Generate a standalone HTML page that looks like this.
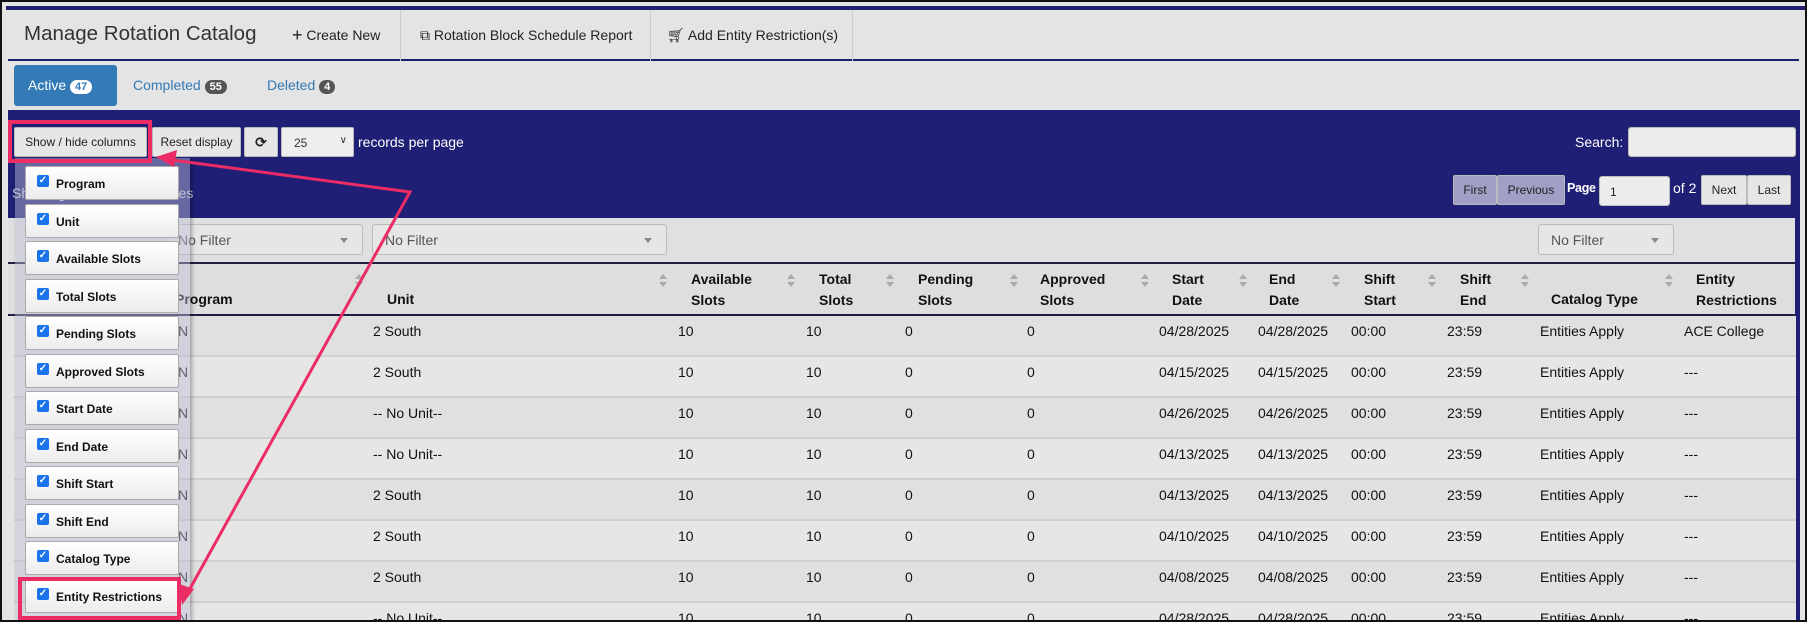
<!DOCTYPE html>
<html><head><meta charset="utf-8"><style>
*{box-sizing:border-box;margin:0;padding:0}
body{width:1807px;height:622px;overflow:hidden;background:#111;font-family:"Liberation Sans",Arial,sans-serif;font-size:14px;color:#222;position:relative}
.a{position:absolute;white-space:nowrap}
#page{position:absolute;left:2px;top:2px;width:1803px;height:618px;background:#e4e4e4;overflow:hidden}
.btn{position:absolute;background:#e6e6e6;border:1px solid #bbb;border-radius:2px;font-size:12px;color:#222;display:flex;align-items:center;justify-content:center}
.hd{position:absolute;font-weight:bold;font-size:14px;line-height:21px;color:#111}
.sort{position:absolute;width:8px;height:14px}
.sort:before{content:"";position:absolute;left:0;top:0;border:4px solid transparent;border-bottom:5px solid #aaa;border-top:0}
.sort:after{content:"";position:absolute;left:0;top:8px;border:4px solid transparent;border-top:5px solid #aaa;border-bottom:0}
.row{position:absolute;left:12px;width:1782px;height:41px;border-bottom:2px solid #cfcfcf}
.c{position:absolute;top:7px;font-size:14px;color:#111}
.item{position:absolute;left:23px;width:154px;height:34px;background:linear-gradient(#fff,#ececec);border:1px solid #aaa;border-radius:2px;font-weight:bold;font-size:12px;color:#111}
.item .cb{position:absolute;left:11px;top:8px;width:12px;height:12px;background:#1a73e8;border-radius:2px;color:#fff;font-size:10px;line-height:12px;text-align:center}
.item span.t{position:absolute;left:30px;top:10px}
.sel{position:absolute;height:31px;background:#e6e6e6;border:1px solid #bbb;border-radius:3px;color:#555;font-size:14px;padding:7px 12px}
.sel:after{content:"";position:absolute;right:14px;top:13px;border:4px solid transparent;border-top:5px solid #888;border-bottom:0}
</style></head><body>
<div id="page">
<div class="a" style="left:4px;top:4px;width:1799px;height:4px;background:#1f1f6e"></div>
<div class="a" style="left:6px;top:8px;width:1791px;height:51px;background:#e4e4e4;border-bottom:2px solid #1f1f6e"></div>
<div class="a" style="left:22px;top:20px;font-size:20.5px;color:#333">Manage Rotation Catalog</div>
<div class="a" style="left:290px;top:22px;font-size:14px;color:#222"><span style="font-size:18px;position:relative;top:1px">+</span> Create New</div>
<div class="a" style="left:398px;top:8px;width:1px;height:51px;background:#ccc"></div>
<div class="a" style="left:418px;top:25px;font-size:14px;color:#222">⧉ Rotation Block Schedule Report</div>
<div class="a" style="left:648px;top:8px;width:1px;height:51px;background:#ccc"></div>
<div class="a" style="left:665px;top:25px;font-size:14px;color:#222">🛒︎ Add Entity Restriction(s)</div>
<div class="a" style="left:850px;top:8px;width:1px;height:51px;background:#ccc"></div>
<div class="a" style="left:12px;top:63px;width:103px;height:41px;background:#337ab7;border-radius:3px;color:#fff;font-size:14px;padding:12px 0 0 14px">Active <span style="background:#fff;color:#337ab7;border-radius:9px;padding:1px 5px;font-size:11px;font-weight:bold">47</span></div>
<div class="a" style="left:131px;top:75px;color:#337ab7;font-size:14px">Completed <span style="background:#555;color:#fff;border-radius:9px;padding:1px 5px;font-size:11px;font-weight:bold">55</span></div>
<div class="a" style="left:265px;top:75px;color:#337ab7;font-size:14px">Deleted <span style="background:#555;color:#fff;border-radius:9px;padding:1px 5px;font-size:11px;font-weight:bold">4</span></div>
<div class="a" style="left:6px;top:108px;width:1791px;height:108px;background:#1f1f75"></div>
<div class="a" style="left:1793px;top:108px;width:5px;height:510px;background:#1f1f75"></div>
<div class="btn" style="left:12px;top:125px;width:133px;height:30px">Show / hide columns</div>
<div class="btn" style="left:150px;top:125px;width:89px;height:30px">Reset display</div>
<div class="btn" style="left:242px;top:125px;width:34px;height:30px;font-weight:bold;font-size:14px">⟳</div>
<div class="a" style="left:279px;top:125px;width:73px;height:30px;background:#eee;border:1px solid #bbb;border-radius:2px;font-size:12px;padding:8px 12px;color:#333">25<span style="position:absolute;right:6px;top:7px;font-size:10px">∨</span></div>
<div class="a" style="left:356px;top:132px;color:#fff;font-size:14px">records per page</div>
<div class="a" style="left:1573px;top:132px;color:#fff;font-size:14px">Search:</div>
<div class="a" style="left:1626px;top:125px;width:168px;height:30px;background:#ececec;border:1px solid #bbb;border-radius:3px"></div>
<div class="a" style="left:10px;top:183px;color:#ccc;font-size:14px">Showing 1 to 25 of 47 entries</div>
<div class="btn" style="left:1451px;top:173px;width:44px;height:30px;background:#a0a0c6">First</div>
<div class="btn" style="left:1495px;top:173px;width:68px;height:30px;background:#a0a0c6">Previous</div>
<div class="a" style="left:1565px;top:179px;color:#fff;font-weight:bold;font-size:12.5px;letter-spacing:-0.3px">Page</div>
<div class="a" style="left:1597px;top:174px;width:71px;height:30px;background:#ececec;border:1px solid #bbb;border-radius:3px;font-size:12px;padding:8px 10px">1</div>
<div class="a" style="left:1671px;top:178px;color:#fff;font-size:14px">of 2</div>
<div class="btn" style="left:1699px;top:173px;width:46px;height:30px">Next</div>
<div class="btn" style="left:1745px;top:173px;width:44px;height:30px">Last</div>
<div class="a" style="left:6px;top:216px;width:1787px;height:46px;background:#e0e0e0;border-bottom:2px solid #1f1f40"></div>
<div class="sel" style="left:163px;top:222px;width:198px">No Filter</div>
<div class="sel" style="left:370px;top:222px;width:295px">No Filter</div>
<div class="sel" style="left:1536px;top:222px;width:136px">No Filter</div>
<div class="a" style="left:6px;top:262px;width:1787px;height:52px;background:#dedede;border-bottom:2px solid #1f1f40"></div>
<div class="hd" style="left:173px;top:287px">Program</div>
<div class="hd" style="left:385px;top:287px">Unit</div>
<div class="hd" style="left:689px;top:267px">Available<br>Slots</div>
<div class="hd" style="left:817px;top:267px">Total<br>Slots</div>
<div class="hd" style="left:916px;top:267px">Pending<br>Slots</div>
<div class="hd" style="left:1038px;top:267px">Approved<br>Slots</div>
<div class="hd" style="left:1170px;top:267px">Start<br>Date</div>
<div class="hd" style="left:1267px;top:267px">End<br>Date</div>
<div class="hd" style="left:1362px;top:267px">Shift<br>Start</div>
<div class="hd" style="left:1458px;top:267px">Shift<br>End</div>
<div class="hd" style="left:1549px;top:287px">Catalog Type</div>
<div class="hd" style="left:1694px;top:267px">Entity<br>Restrictions</div>
<div class="sort" style="left:353px;top:272px"></div>
<div class="sort" style="left:657px;top:272px"></div>
<div class="sort" style="left:785px;top:272px"></div>
<div class="sort" style="left:884px;top:272px"></div>
<div class="sort" style="left:1008px;top:272px"></div>
<div class="sort" style="left:1139px;top:272px"></div>
<div class="sort" style="left:1237px;top:272px"></div>
<div class="sort" style="left:1330px;top:272px"></div>
<div class="sort" style="left:1426px;top:272px"></div>
<div class="sort" style="left:1519px;top:272px"></div>
<div class="sort" style="left:1663px;top:272px"></div>
<div class="row" style="top:314px;background:#e0e0e0"><span class="c" style="left:164px">N</span><span class="c" style="left:359px">2 South</span><span class="c" style="left:664px">10</span><span class="c" style="left:792px">10</span><span class="c" style="left:891px">0</span><span class="c" style="left:1013px">0</span><span class="c" style="left:1145px">04/28/2025</span><span class="c" style="left:1244px">04/28/2025</span><span class="c" style="left:1337px">00:00</span><span class="c" style="left:1433px">23:59</span><span class="c" style="left:1526px">Entities Apply</span><span class="c" style="left:1670px">ACE College</span></div>
<div class="row" style="top:355px;background:#e6e6e6"><span class="c" style="left:164px">N</span><span class="c" style="left:359px">2 South</span><span class="c" style="left:664px">10</span><span class="c" style="left:792px">10</span><span class="c" style="left:891px">0</span><span class="c" style="left:1013px">0</span><span class="c" style="left:1145px">04/15/2025</span><span class="c" style="left:1244px">04/15/2025</span><span class="c" style="left:1337px">00:00</span><span class="c" style="left:1433px">23:59</span><span class="c" style="left:1526px">Entities Apply</span><span class="c" style="left:1670px">---</span></div>
<div class="row" style="top:396px;background:#e0e0e0"><span class="c" style="left:164px">N</span><span class="c" style="left:359px">-- No Unit--</span><span class="c" style="left:664px">10</span><span class="c" style="left:792px">10</span><span class="c" style="left:891px">0</span><span class="c" style="left:1013px">0</span><span class="c" style="left:1145px">04/26/2025</span><span class="c" style="left:1244px">04/26/2025</span><span class="c" style="left:1337px">00:00</span><span class="c" style="left:1433px">23:59</span><span class="c" style="left:1526px">Entities Apply</span><span class="c" style="left:1670px">---</span></div>
<div class="row" style="top:437px;background:#e6e6e6"><span class="c" style="left:164px">N</span><span class="c" style="left:359px">-- No Unit--</span><span class="c" style="left:664px">10</span><span class="c" style="left:792px">10</span><span class="c" style="left:891px">0</span><span class="c" style="left:1013px">0</span><span class="c" style="left:1145px">04/13/2025</span><span class="c" style="left:1244px">04/13/2025</span><span class="c" style="left:1337px">00:00</span><span class="c" style="left:1433px">23:59</span><span class="c" style="left:1526px">Entities Apply</span><span class="c" style="left:1670px">---</span></div>
<div class="row" style="top:478px;background:#e0e0e0"><span class="c" style="left:164px">N</span><span class="c" style="left:359px">2 South</span><span class="c" style="left:664px">10</span><span class="c" style="left:792px">10</span><span class="c" style="left:891px">0</span><span class="c" style="left:1013px">0</span><span class="c" style="left:1145px">04/13/2025</span><span class="c" style="left:1244px">04/13/2025</span><span class="c" style="left:1337px">00:00</span><span class="c" style="left:1433px">23:59</span><span class="c" style="left:1526px">Entities Apply</span><span class="c" style="left:1670px">---</span></div>
<div class="row" style="top:519px;background:#e6e6e6"><span class="c" style="left:164px">N</span><span class="c" style="left:359px">2 South</span><span class="c" style="left:664px">10</span><span class="c" style="left:792px">10</span><span class="c" style="left:891px">0</span><span class="c" style="left:1013px">0</span><span class="c" style="left:1145px">04/10/2025</span><span class="c" style="left:1244px">04/10/2025</span><span class="c" style="left:1337px">00:00</span><span class="c" style="left:1433px">23:59</span><span class="c" style="left:1526px">Entities Apply</span><span class="c" style="left:1670px">---</span></div>
<div class="row" style="top:560px;background:#e0e0e0"><span class="c" style="left:164px">N</span><span class="c" style="left:359px">2 South</span><span class="c" style="left:664px">10</span><span class="c" style="left:792px">10</span><span class="c" style="left:891px">0</span><span class="c" style="left:1013px">0</span><span class="c" style="left:1145px">04/08/2025</span><span class="c" style="left:1244px">04/08/2025</span><span class="c" style="left:1337px">00:00</span><span class="c" style="left:1433px">23:59</span><span class="c" style="left:1526px">Entities Apply</span><span class="c" style="left:1670px">---</span></div>
<div class="row" style="top:601px;background:#e6e6e6"><span class="c" style="left:164px">N</span><span class="c" style="left:359px">-- No Unit--</span><span class="c" style="left:664px">10</span><span class="c" style="left:792px">10</span><span class="c" style="left:891px">0</span><span class="c" style="left:1013px">0</span><span class="c" style="left:1145px">04/28/2025</span><span class="c" style="left:1244px">04/28/2025</span><span class="c" style="left:1337px">00:00</span><span class="c" style="left:1433px">23:59</span><span class="c" style="left:1526px">Entities Apply</span><span class="c" style="left:1670px">---</span></div>
<div class="a" style="left:13px;top:156px;width:175px;height:470px;background:rgba(190,190,215,0.45);box-shadow:2px 2px 4px rgba(0,0,0,.3)"></div>
<div class="item" style="top:164px"><span class="cb">✓</span><span class="t">Program</span></div>
<div class="item" style="top:202px"><span class="cb">✓</span><span class="t">Unit</span></div>
<div class="item" style="top:239px"><span class="cb">✓</span><span class="t">Available Slots</span></div>
<div class="item" style="top:277px"><span class="cb">✓</span><span class="t">Total Slots</span></div>
<div class="item" style="top:314px"><span class="cb">✓</span><span class="t">Pending Slots</span></div>
<div class="item" style="top:352px"><span class="cb">✓</span><span class="t">Approved Slots</span></div>
<div class="item" style="top:389px"><span class="cb">✓</span><span class="t">Start Date</span></div>
<div class="item" style="top:427px"><span class="cb">✓</span><span class="t">End Date</span></div>
<div class="item" style="top:464px"><span class="cb">✓</span><span class="t">Shift Start</span></div>
<div class="item" style="top:502px"><span class="cb">✓</span><span class="t">Shift End</span></div>
<div class="item" style="top:539px"><span class="cb">✓</span><span class="t">Catalog Type</span></div>
<div class="item" style="top:577px"><span class="cb">✓</span><span class="t">Entity Restrictions</span></div>
<div class="a" style="left:6px;top:118px;width:144px;height:43px;border:4px solid #ec2c64"></div>
<div class="a" style="left:16px;top:575px;width:163px;height:43px;border:4px solid #ec2c64"></div>
<svg class="a" style="left:0;top:0" width="1807" height="622">
<polyline points="170,158 408,190 185,592" fill="none" stroke="#ec2c64" stroke-width="3"/>
<polygon points="154,155 175,148 172,165" fill="#ec2c64"/>
<polygon points="180,603 177,582 192,587" fill="#ec2c64"/>
</svg>
</div>
</body></html>
